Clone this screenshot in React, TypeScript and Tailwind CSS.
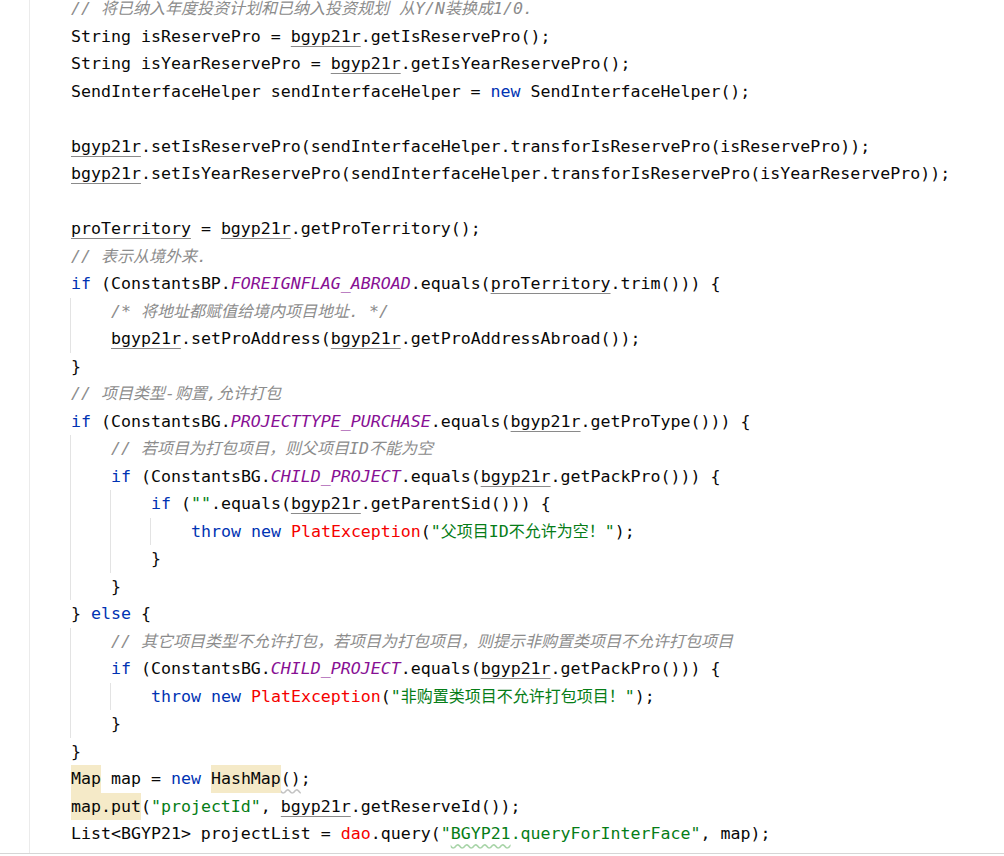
import type { ReactNode } from 'react';

type Kind = 't' | 'k' | 'c' | 'f' | 's' | 'r' | 'u' | 'h' | 'w' | 'sw';
type Tok = [Kind, string];

interface Line {
  depth: number;
  toks: Tok[];
}

const KIND_CLASS: Record<Kind, string> = {
  t: 'text-[#080808]',
  k: 'text-[#0033b3]',
  c: 'text-[#8c8c8c] italic',
  f: 'text-[#871094] italic',
  s: 'text-[#067d17]',
  r: 'text-[#f50000]',
  u: 'text-[#080808] underline decoration-[#8a8a8a] underline-offset-[4px]',
  h: 'text-[#080808] bg-[#f5eac8] inline-block h-[27.5px]',
  w: 'text-[#080808] underline decoration-wavy decoration-[#c4c4c4] underline-offset-[4px]',
  sw: 'text-[#067d17] underline decoration-wavy decoration-[#a8d4a8] underline-offset-[4px]',
};

const L = (depth: number, ...toks: Tok[]): Line => ({ depth, toks });

const LINES: Line[] = [
  L(0, ['c', '// 将已纳入年度投资计划和已纳入投资规划 从Y/N装换成1/0.']),
  L(0, ['t', 'String isReservePro = '], ['u', 'bgyp21r'], ['t', '.getIsReservePro();']),
  L(0, ['t', 'String isYearReservePro = '], ['u', 'bgyp21r'], ['t', '.getIsYearReservePro();']),
  L(0, ['t', 'SendInterfaceHelper sendInterfaceHelper = '], ['k', 'new'], ['t', ' SendInterfaceHelper();']),
  L(0),
  L(0, ['u', 'bgyp21r'], ['t', '.setIsReservePro(sendInterfaceHelper.transforIsReservePro(isReservePro));']),
  L(0, ['u', 'bgyp21r'], ['t', '.setIsYearReservePro(sendInterfaceHelper.transforIsReservePro(isYearReservePro));']),
  L(0),
  L(0, ['u', 'proTerritory'], ['t', ' = '], ['u', 'bgyp21r'], ['t', '.getProTerritory();']),
  L(0, ['c', '// 表示从境外来.']),
  L(0, ['k', 'if'], ['t', ' (ConstantsBP.'], ['f', 'FOREIGNFLAG_ABROAD'], ['t', '.equals('], ['u', 'proTerritory'], ['t', '.trim())) {']),
  L(1, ['c', '/* 将地址都赋值给境内项目地址. */']),
  L(1, ['u', 'bgyp21r'], ['t', '.setProAddress('], ['u', 'bgyp21r'], ['t', '.getProAddressAbroad());']),
  L(0, ['t', '}']),
  L(0, ['c', '// 项目类型-购置,允许打包']),
  L(0, ['k', 'if'], ['t', ' (ConstantsBG.'], ['f', 'PROJECTTYPE_PURCHASE'], ['t', '.equals('], ['u', 'bgyp21r'], ['t', '.getProType())) {']),
  L(1, ['c', '// 若项目为打包项目，则父项目ID不能为空']),
  L(1, ['k', 'if'], ['t', ' (ConstantsBG.'], ['f', 'CHILD_PROJECT'], ['t', '.equals('], ['u', 'bgyp21r'], ['t', '.getPackPro())) {']),
  L(2, ['k', 'if'], ['t', ' ('], ['s', '""'], ['t', '.equals('], ['u', 'bgyp21r'], ['t', '.getParentSid())) {']),
  L(3, ['k', 'throw'], ['t', ' '], ['k', 'new'], ['t', ' '], ['r', 'PlatException'], ['t', '('], ['s', '"父项目ID不允许为空！"'], ['t', ');']),
  L(2, ['t', '}']),
  L(1, ['t', '}']),
  L(0, ['t', '} '], ['k', 'else'], ['t', ' {']),
  L(1, ['c', '// 其它项目类型不允许打包，若项目为打包项目，则提示非购置类项目不允许打包项目']),
  L(1, ['k', 'if'], ['t', ' (ConstantsBG.'], ['f', 'CHILD_PROJECT'], ['t', '.equals('], ['u', 'bgyp21r'], ['t', '.getPackPro())) {']),
  L(2, ['k', 'throw'], ['t', ' '], ['k', 'new'], ['t', ' '], ['r', 'PlatException'], ['t', '('], ['s', '"非购置类项目不允许打包项目！"'], ['t', ');']),
  L(1, ['t', '}']),
  L(0, ['t', '}']),
  L(0, ['h', 'Map'], ['t', ' map = '], ['k', 'new'], ['t', ' '], ['h', 'HashMap'], ['w', '()'], ['t', ';']),
  L(0, ['h', 'map.put'], ['t', '('], ['s', '"projectId"'], ['t', ', '], ['u', 'bgyp21r'], ['t', '.getReserveId());']),
  L(0, ['t', 'List<BGYP21> projectList = '], ['r', 'dao'], ['t', '.query('], ['s', '"'], ['sw', 'BGYP21'], ['s', '.queryForInterFace"'], ['t', ', map);']),
];

function splitCjk(text: string): ReactNode[] {
  return text.split(/([\u3000-\u9fff\uff00-\uffef]+)/).map((part, i) =>
    /[\u3000-\u9fff\uff00-\uffef]/.test(part) ? (
      <span key={i} className="text-[16px]">{part}</span>
    ) : (
      part
    ),
  );
}

function CodeLine({ line }: { line: Line }) {
  return (
    <div className="flex h-[27.5px] items-center whitespace-pre">
      {Array.from({ length: line.depth }).map((_, i) => (
        <span key={i} className="h-full w-[40px] shrink-0 border-l border-[#e3e3e3]" />
      ))}
      <span className="pl-[1px] leading-[27.5px]">
        {line.toks.map(([kind, text], i) => (
          <span key={i} className={KIND_CLASS[kind]}>
            {splitCjk(text)}
          </span>
        ))}
      </span>
    </div>
  );
}

export default function App() {
  return (
    <div className="flex h-[856px] w-full flex-col overflow-hidden bg-white">
      <div className="flex min-h-0 flex-1">
        <div className="w-[30px] shrink-0 border-r border-[#ebebeb]" />
        <div
          className="flex-1 overflow-hidden pl-[40px] text-[16.6px]"
          style={{ fontFamily: '"DejaVu Sans Mono", "Noto Sans CJK SC", monospace' }}
        >
          <div className="-mt-[5px]">
            {LINES.map((line, i) => (
              <CodeLine key={i} line={line} />
            ))}
          </div>
        </div>
      </div>
      <div className="flex h-[3px] shrink-0 items-start border-t border-[#d6d6d6]" />
    </div>
  );
}
